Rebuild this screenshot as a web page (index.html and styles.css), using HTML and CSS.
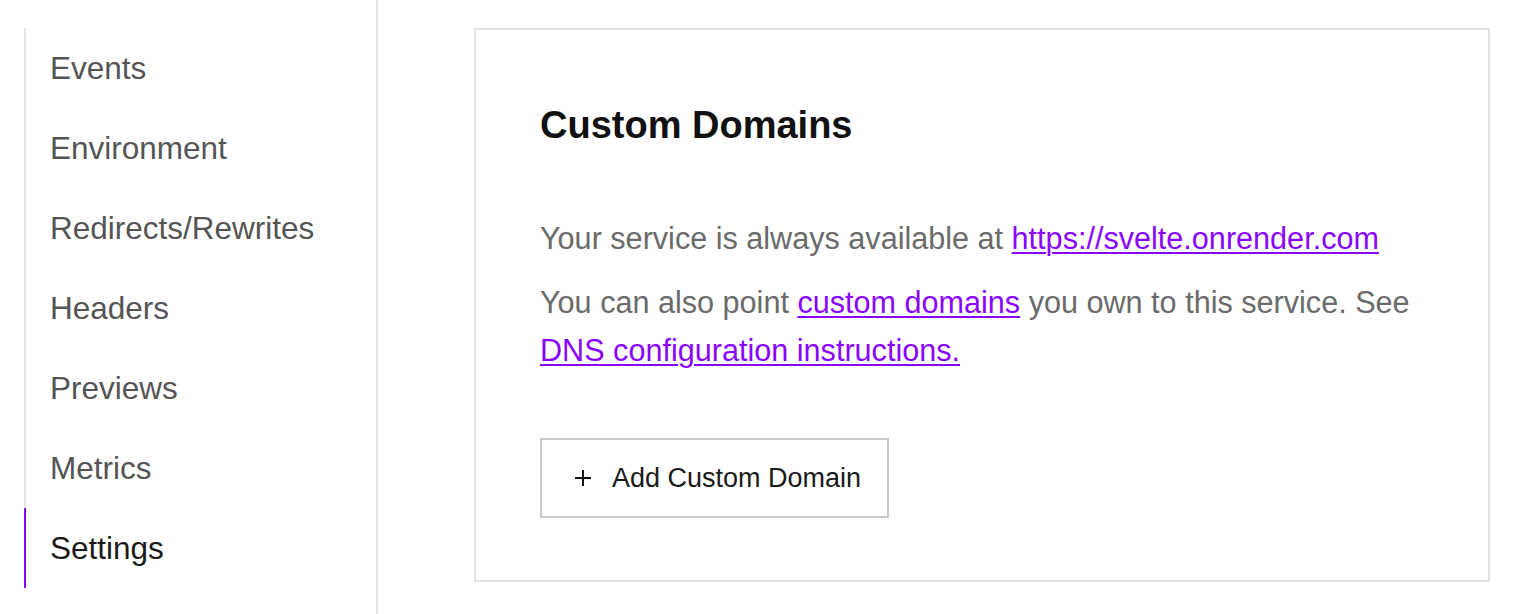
FILE: index.html
```html
<!DOCTYPE html>
<html lang="en">
<head>
<meta charset="utf-8">
<title>Settings</title>
<link rel="stylesheet" href="styles.css">
</head>
<body>
<div class="layout">
  <aside class="sidebar">
    <ul class="nav">
      <li class="nav-item">Events</li>
      <li class="nav-item">Environment</li>
      <li class="nav-item">Redirects/Rewrites</li>
      <li class="nav-item">Headers</li>
      <li class="nav-item">Previews</li>
      <li class="nav-item">Metrics</li>
      <li class="nav-item active">Settings</li>
    </ul>
  </aside>
  <main class="main">
    <section class="card">
      <h2 class="card-title">Custom Domains</h2>
      <p class="text">Your service is always available at <a class="link" href="#">https://svelte.onrender.com</a></p>
      <p class="text">You can also point <a class="link" href="#">custom domains</a> you own to this service. See <a class="link" href="#">DNS configuration instructions.</a></p>
      <button class="btn" type="button">
        <svg class="btn-icon" viewBox="0 0 18 18" width="18" height="18" aria-hidden="true"><path d="M9 1v16M1 9h16" stroke="#111" stroke-width="2" fill="none"/></svg>
        <span>Add Custom Domain</span>
      </button>
    </section>
  </main>
</div>
</body>
</html>
```
FILE: styles.css
```css
* { box-sizing: border-box; }
html, body { margin: 0; padding: 0; background: #fff; }
body {
  font-family: "Liberation Sans", Arial, Helvetica, sans-serif;
  color: #111;
}
.layout {
  display: flex;
  min-height: 100vh;
}
.sidebar {
  width: 378px;
  flex: none;
  border-right: 2px solid #e6e6e6;
  padding: 28px 0 0 24px;
}
.nav {
  list-style: none;
  margin: 0;
  padding: 0;
  border-left: 2px solid #e6e6e6;
}
.nav-item {
  font-size: 31.5px;
  line-height: 80px;
  height: 80px;
  padding-left: 24px;
  color: #555;
}
.nav-item.active {
  color: #1a1a1a;
  margin-left: -2px;
  border-left: 2px solid #8a05ff;
}
.main {
  flex: 1;
  padding: 28px 28px 0 96px;
}
.card {
  border: 2px solid #e3e3e3;
  height: 554px;
  padding: 72px 64px 0 64px;
}
.card-title {
  margin: 0 0 66px 0;
  font-size: 38px;
  line-height: 46px;
  font-weight: 700;
  color: #111;
}
.text {
  margin: 0 0 16px 0;
  font-size: 30.6px;
  line-height: 48px;
  color: #6b6b6b;
}
.link {
  color: #8a05ff;
  text-decoration: underline;
  text-underline-offset: 3px;
  text-decoration-thickness: 2px;
}
.btn {
  margin-top: 48px;
  display: inline-flex;
  align-items: center;
  gap: 20px;
  height: 80px;
  padding: 0 26px 0 32px;
  background: #fff;
  border: 2px solid #c9c9c9;
  font-family: "Liberation Sans", Arial, Helvetica, sans-serif;
  font-size: 27px;
  color: #1a1a1a;
  cursor: pointer;
}
.btn-icon { display: block; }
```
